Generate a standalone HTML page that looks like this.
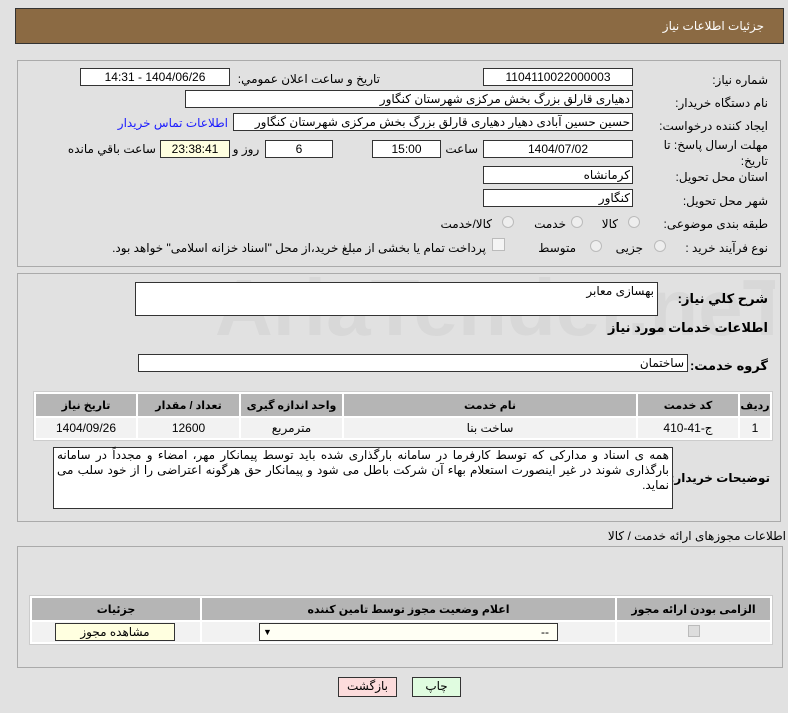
<!DOCTYPE html>
<html><head><meta charset="utf-8"><style>
*{box-sizing:border-box;margin:0;padding:0}
body{width:788px;height:713px;background:#e1e1e1;font-family:"Liberation Sans","DejaVu Sans",sans-serif;font-size:12px;color:#000;position:relative;overflow:hidden;direction:rtl}
.a{position:absolute;white-space:nowrap}
.box{position:absolute;background:#fff;border:1px solid #333;height:18px;line-height:16px;text-align:center}
.panel{position:absolute;border:1px solid #aaa;background:#e1e1e1}
.lbl{position:absolute;white-space:nowrap;text-align:right}
.radio{position:absolute;width:12px;height:12px;border-radius:50%;border:1px solid #bbb;background:#eee}
table{position:absolute;border-collapse:separate;border-spacing:2px;background:#fff;border:1px solid #ccc}
th{background:#b5b5b5;font-weight:bold;height:22px;font-size:11px}
td{background:#f2f2f2;height:20px;text-align:center}
</style></head><body>
<div class="a" style="left:15px;top:8px;width:769px;height:36px;background:#8b6a43;border:1px solid #333"></div>
<div class="a" style="right:24px;top:19px;color:#fff">جزئیات اطلاعات نیاز</div>

<div class="panel" style="left:17px;top:60px;width:764px;height:207px"></div>
<div class="lbl" style="right:20px;top:73px">شماره نیاز:</div>
<div class="box" style="left:483px;top:68px;width:150px">1104110022000003</div>
<div class="lbl" style="right:408px;top:72px">تاریخ و ساعت اعلان عمومي:</div>
<div class="box" style="left:80px;top:68px;width:150px">1404/06/26 - 14:31</div>
<div class="lbl" style="right:20px;top:96px">نام دستگاه خریدار:</div>
<div class="box" style="left:185px;top:90px;width:448px;text-align:right;padding-right:2px">دهیاری قارلق بزرگ بخش مرکزی شهرستان کنگاور</div>
<div class="lbl" style="right:20px;top:119px">ایجاد کننده درخواست:</div>
<div class="box" style="left:233px;top:113px;width:400px;text-align:right;padding-right:2px">حسین حسین آبادی دهیار دهیاری قارلق بزرگ بخش مرکزی شهرستان کنگاور</div>
<div class="lbl" style="right:560px;top:116px;color:#1a1aff">اطلاعات تماس خریدار</div>
<div class="lbl" style="right:20px;top:137px;line-height:16px;white-space:normal;width:110px">مهلت ارسال پاسخ: تا تاریخ:</div>
<div class="box" style="left:483px;top:140px;width:150px">1404/07/02</div>
<div class="lbl" style="right:310px;top:142px">ساعت</div>
<div class="box" style="left:372px;top:140px;width:69px">15:00</div>
<div class="box" style="left:265px;top:140px;width:68px">6</div>
<div class="a" style="left:231px;top:142px;width:30px;text-align:center">روز و</div>
<div class="box" style="left:160px;top:140px;width:70px;background:#ffffe0">23:38:41</div>
<div class="lbl" style="right:632px;top:142px">ساعت باقي مانده</div>
<div class="lbl" style="right:20px;top:170px">استان محل تحویل:</div>
<div class="box" style="left:483px;top:166px;width:150px;text-align:right;padding-right:2px">کرمانشاه</div>
<div class="lbl" style="right:20px;top:194px">شهر محل تحویل:</div>
<div class="box" style="left:483px;top:189px;width:150px;text-align:right;padding-right:2px">کنگاور</div>
<div class="lbl" style="right:20px;top:217px">طبقه بندی موضوعی:</div>
<div class="radio" style="left:628px;top:216px"></div><div class="lbl" style="right:170px;top:217px">کالا</div>
<div class="radio" style="left:571px;top:216px"></div><div class="lbl" style="right:222px;top:217px">خدمت</div>
<div class="radio" style="left:502px;top:216px"></div><div class="lbl" style="right:296px;top:217px">کالا/خدمت</div>
<div class="lbl" style="right:20px;top:241px">نوع فرآیند خرید :</div>
<div class="radio" style="left:654px;top:240px"></div><div class="lbl" style="right:145px;top:241px">جزیی</div>
<div class="radio" style="left:590px;top:240px"></div><div class="lbl" style="right:212px;top:241px">متوسط</div>
<div class="a" style="left:492px;top:238px;width:13px;height:13px;border:1px solid #bbb;background:#f4f4f4"></div>
<div class="lbl" style="right:302px;top:241px">پرداخت تمام یا بخشی از مبلغ خرید،از محل "اسناد خزانه اسلامی" خواهد بود.</div>

<div class="panel" style="left:17px;top:273px;width:764px;height:249px"></div>
<div class="a" style="left:215px;top:262px;width:560px;overflow:hidden;font-size:80px;font-weight:bold;color:#d8d8d8;direction:ltr;font-family:'Liberation Sans',sans-serif">AriaTender.neT</div>
<div class="lbl" style="right:20px;top:291px;font-weight:bold;font-size:13px">شرح كلي نياز:</div>
<div class="box" style="left:135px;top:282px;width:523px;height:34px;text-align:right;padding-right:3px">بهسازی معابر</div>
<div class="lbl" style="right:20px;top:320px;font-weight:bold;font-size:13px">اطلاعات خدمات مورد نیاز</div>
<div class="lbl" style="right:20px;top:358px;font-weight:bold;font-size:13px">گروه خدمت:</div>
<div class="box" style="left:138px;top:354px;width:550px;text-align:right;padding-right:3px">ساختمان</div>
<table style="left:33px;top:391px;width:740px"><tr><th style="width:30px">ردیف</th><th style="width:100px">کد خدمت</th><th>نام خدمت</th><th style="width:101px">واحد اندازه گیری</th><th style="width:101px">تعداد / مقدار</th><th style="width:100px">تاریخ نیاز</th></tr>
<tr><td>1</td><td>ج-41-410</td><td>ساخت بنا</td><td>مترمربع</td><td>12600</td><td>1404/09/26</td></tr></table>
<div class="lbl" style="right:18px;top:471px;font-weight:bold;font-size:12px">توضیحات خریدار:</div>
<div class="box" style="left:53px;top:447px;width:620px;height:62px;text-align:right;padding:0 3px;white-space:normal;line-height:15px;text-align:justify">همه ی اسناد و مدارکی که توسط کارفرما در سامانه بارگذاری شده باید توسط پیمانکار مهر، امضاء و مجدداً در سامانه بارگذاری شوند در غیر اینصورت استعلام بهاء آن شرکت باطل می شود و پیمانکار حق هرگونه اعتراضی را از خود سلب می نماید.</div>

<div class="lbl" style="right:2px;top:529px">اطلاعات مجوزهای ارائه خدمت / کالا</div>
<div class="panel" style="left:17px;top:546px;width:766px;height:122px"></div>
<table style="left:29px;top:595px;width:744px"><tr><th style="width:153px">الزامی بودن ارائه مجوز</th><th>اعلام وضعیت مجوز توسط تامین کننده</th><th style="width:168px">جزئیات</th></tr>
<tr><td><span style="display:inline-block;width:12px;height:12px;background:#ddd;border:1px solid #bbb"></span></td><td></td><td></td></tr></table>
<div class="box" style="left:259px;top:623px;width:299px;background:#fffff4;text-align:right;padding-right:8px">--<span style="position:absolute;left:3px;font-size:9px">▼</span></div>
<div class="box" style="left:55px;top:623px;width:120px;background:#ffffe0">مشاهده مجوز</div>
<div class="box" style="left:338px;top:677px;width:59px;height:20px;background:#fcdcdc">بازگشت</div>
<div class="box" style="left:412px;top:677px;width:49px;height:20px;background:#e0fce0">چاپ</div>
</body></html>
